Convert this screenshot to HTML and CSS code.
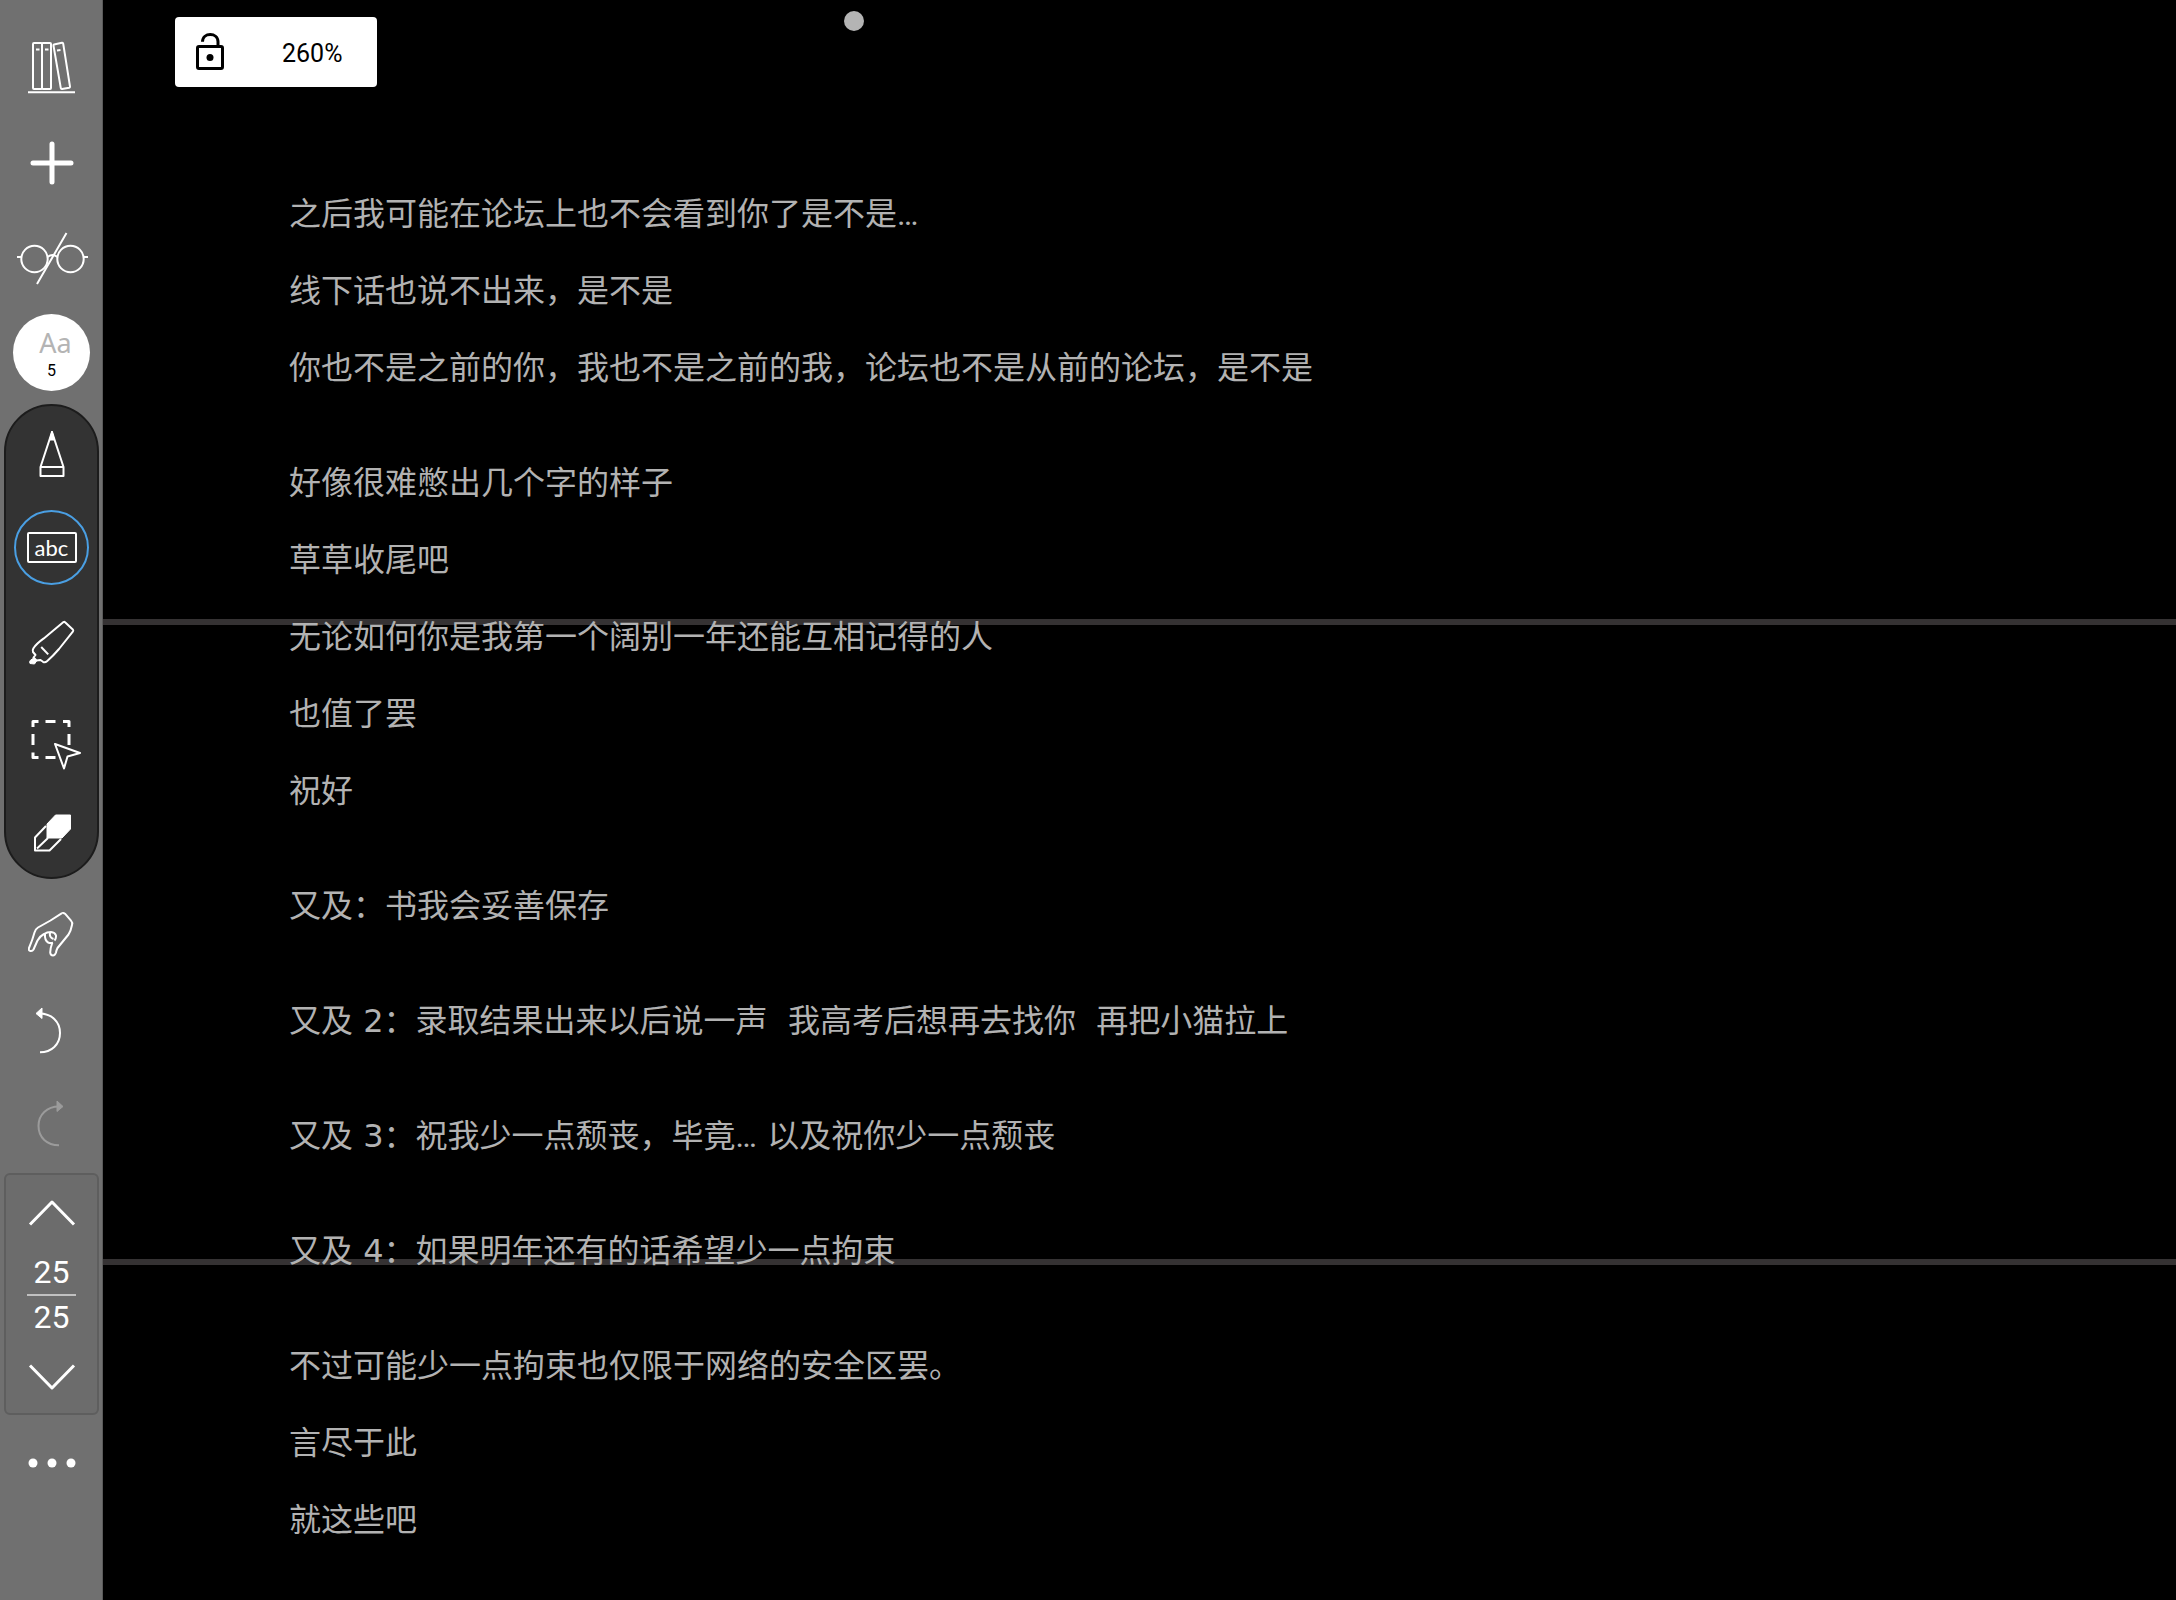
FILE: index.html
```html
<!DOCTYPE html>
<html lang="zh-CN">

<head>
    <meta charset="UTF-8">
    <title>260%</title>
    <link rel="stylesheet" href="styles.css">
</head>

<body>
    <nav id="toolbar">
        <button class="tool library" aria-label="library">
            <svg width="52" height="56" viewBox="0 0 52 56">
                <rect x="7" y="3" width="9" height="46" rx="1"/>
                <rect x="16" y="3" width="9" height="46" rx="1"/>
                <path d="M10 9.500h3.500M19 9.500h3.500M31 10.500l3.500-.5"/>
                <path d="M28 4.500l8-1.700q1-.2 1.200.8l6.800 43q.1 1-.8 1.200l-7.200 1.200q-1 .1-1.200-.9l-7.300-42.500q-.1-.9.500-1.100z"/>
                <path class="thick" d="M2 52.200h47"/>
            </svg>
        </button>
        <button class="tool add" aria-label="add">
            <svg width="44" height="44" viewBox="0 0 44 44">
                <path d="M22 3v38M3 22h38"/>
            </svg>
        </button>
        <button class="tool glasses" aria-label="reading mode">
            <svg width="72" height="54" viewBox="-1 0 72 54">
                <circle cx="17.500" cy="28" r="13.200"/>
                <circle cx="53.500" cy="28" r="13.200"/>
                <path d="M0 26h4.500M66.500 26H71M30.500 26q5-4 10 0M49.500 2L20 53"/>
            </svg>
        </button>
        <button class="style-badge"><span class="sample">Aa</span><span class="size">5</span></button>

        <div id="pens">
            <button class="tool pencil" aria-label="pen">
                <svg width="28" height="48" viewBox="0 0 28 48">
                    <path d="M14 2L2.500 37v9h23v-9zM2.500 37h23"/>
                    <path class="solid" d="M14 1l-2.500 9h5z"/>
                </svg>
            </button>
            <button class="tool text on"><span>abc</span></button>
            <button class="tool marker" aria-label="highlighter">
                <svg width="48" height="48" viewBox="0 0 48 48">
                    <path d="M36.800 3l8 7.500q.8.800.2 1.800L31 30q-6 7-12 12.200-2 1.800-4 .6L12.500 41l-4 .5-3-3 2-2.500-2.500-3q-.8-1.500.3-3.500Q8 25 15.800 19.400 26 11 35.500 3q.8-.5 1.300 0z"/>
                    <path d="M13.200 28l7 7.400"/>
                    <path class="solid" d="M5 39.500l3.500 2.500-2 3-4.500-.5q-.8-1.500.2-3z"/>
                </svg>
            </button>
            <button class="tool select" aria-label="select">
                <svg width="60" height="52" viewBox="-8 0 60 52">
                    <path class="dashes" d="M3 9V3.500h5.500M15.500 3.500h10M33 3.500h6V9M3 16v11M39 16v11M3 34.500v5h5.500M15.500 39.500h10"/>
                    <path class="arrow" d="M25 26l25 9-12.500 3.500L34 50.500z"/>
                </svg>
            </button>
            <button class="tool eraser" aria-label="eraser">
                <svg width="40" height="40" viewBox="0 0 40 40">
                    <path d="M14 13L3 24.500v13H17.500L29 26M5 35.500l11-10.500"/>
                    <path class="solid" d="M23.500 2H38.500v14L30 25H15V11z"/>
                </svg>
            </button>
        </div>

        <button class="tool hand" aria-label="finger mode">
            <svg width="48" height="48" viewBox="0 0 48 48">
                <path d="M34 3.200q1.500-.8 3 .5l6 7q1.800 2 1 4.300-1 5.500-3.500 9.500L29.500 38q-1 2-1.500 4.500-1 3-3 3-2.500 0-2.800-3 .3-5 2-9.500"/>
                <path d="M34 3.200L22.500 10.500 10 17.500q-2.500 1.500-3.500 5Q4.500 30 1 38q-.8 2.800 1.500 3 2 .3 3-1.500l4-9Q12 26 16 24q3-2 7-2 4 .3 5 3.500.3 3-1.500 5"/>
                <path d="M17 24q-.5 6 3 8.500 2.500 1 5 .3M22 22.500q-1 5 3.500 6.500"/>
            </svg>
        </button>
        <button class="tool undo" aria-label="undo">
            <svg width="40" height="48" viewBox="0 0 40 48">
                <path d="M7.500 6.500c12 0 20.500 8 20.500 19.500S19.500 45.300 8 45.300"/>
                <path class="solid" d="M4 6.500L10 1v10.500z"/>
            </svg>
        </button>
        <button class="tool redo" aria-label="redo" disabled>
            <svg width="36" height="48" viewBox="0 0 36 48">
                <path d="M25 6.500C13 6.500 4.500 14.500 4.500 26S13 45.300 25 45.300"/>
                <path class="solid" d="M29 6.500L23 1v10.500z"/>
            </svg>
        </button>

        <div id="pager">
            <button class="tool" aria-label="previous page">
                <svg width="48" height="28" viewBox="0 0 48 28">
                    <path d="M2 25.500L24 3l22 22.500"/>
                </svg>
            </button>
            <div class="pages">
                <span>25</span>
                <span>25</span>
            </div>
            <button class="tool" aria-label="next page">
                <svg width="48" height="28" viewBox="0 0 48 28">
                    <path d="M2 2.500L24 25 46 2.500"/>
                </svg>
            </button>
        </div>

        <button class="tool more" aria-label="more">
            <svg width="48" height="10" viewBox="0 0 48 10">
                <circle cx="5" cy="5" r="4.500"/>
                <circle cx="24" cy="5" r="4.500"/>
                <circle cx="43" cy="5" r="4.500"/>
            </svg>
        </button>
    </nav>

    <main id="page">
        <button id="zoom">
            <svg width="32" height="40" viewBox="0 0 32 40">
                <rect x="3.500" y="14.500" width="25" height="22" rx="1.500"/>
                <path d="M8.500 9.800C8.500 0 24 0 24 9.800V14"/>
                <circle cx="16" cy="25.500" r="3.500"/>
            </svg>
            <span>260%</span>
        </button>
        <span id="handle"></span>
        <hr class="break first">
        <hr class="break second">

        <article id="note">
            <section>
                <p>之后我可能在论坛上也不会看到你了是不是<span class="dots">…</span></p>
                <p>线下话也说不出来，是不是</p>
                <p>你也不是之前的你，我也不是之前的我，论坛也不是从前的论坛，是不是</p>
            </section>
            <section>
                <p>好像很难憋出几个字的样子</p>
                <p>草草收尾吧</p>
                <p>无论如何你是我第一个阔别一年还能互相记得的人</p>
                <p>也值了罢</p>
                <p>祝好</p>
            </section>
            <p>又及：书我会妥善保存</p>
            <p>又及 2：录取结果出来以后说一声  我高考后想再去找你  再把小猫拉上</p>
            <p>又及 3：祝我少一点颓丧，毕竟<span class="dots">…</span> 以及祝你少一点颓丧</p>
            <p>又及 4：如果明年还有的话希望少一点拘束</p>
            <section>
                <p>不过可能少一点拘束也仅限于网络的安全区罢。</p>
                <p>言尽于此</p>
                <p>就这些吧</p>
            </section>
        </article>
    </main>
</body>

</html>
```
FILE: styles.css
```css
* {
    margin: 0;
    padding: 0;
    box-sizing: border-box;
}

body {
    display: flex;
    min-height: 100vh;
    background-color: #000;
    font-family: Roboto, "Noto Sans CJK SC", sans-serif;
}

button {
    border: 0;
    background: none;
    font-family: inherit;
    cursor: pointer;
}

/* 左侧工具栏 */
#toolbar {
    display: flex;
    flex-direction: column;
    align-items: center;
    flex: none;
    width: 103px;
    padding-top: 20px;
    background-color: #707070;
    box-shadow: inset -1px 0 #5a5a5a;
}

.tool {
    display: flex;
    align-items: center;
    justify-content: center;
    flex: none;
    width: 95px;
    height: 95px;
}

#pens .tool {
    width: 91px;
}

.tool svg {
    flex: none;
    fill: none;
    stroke: #fff;
    stroke-width: 2;
    stroke-linejoin: round;
}

.tool .solid {
    fill: #fff;
    stroke-width: 1;
}

.add svg {
    stroke-width: 5;
    stroke-linecap: round;
}

.style-badge {
    display: flex;
    flex-direction: column;
    align-items: center;
    flex: none;
    width: 77px;
    height: 77px;
    margin: 9px 0 13px;
    padding-top: 10px;
    border-radius: 50%;
    background-color: #fff;
}

.style-badge .sample {
    padding-left: 8px;
    font: 27px/37px "Noto Sans", sans-serif;
    color: #b4b4b4;
}

.style-badge .size {
    font-size: 16px;
    line-height: 19px;
    color: #000;
}

#pens {
    display: flex;
    flex-direction: column;
    align-items: center;
    flex: none;
    width: 95px;
    padding-bottom: 9px;
    border: 2px solid #1c1c1c;
    border-radius: 48px;
    background-color: #333;
}

.text span {
    display: flex;
    align-items: center;
    justify-content: center;
    width: 50px;
    height: 31px;
    border: 2px solid #fff;
    border-radius: 2px;
    font: 22px/26px Lato, sans-serif;
    color: #fff;
}

#pens .text {
    width: 75px;
    height: 75px;
    margin: 9px 0 10px;
    border-radius: 50%;
}

#pens .on {
    border: 2px solid #4a9fe3;
}

#pens .select {
    height: 108px;
}

.select svg {
    stroke-width: 3;
}

.select .arrow {
    stroke-width: 2;
}

#pens .eraser {
    height: 70px;
}

.hand {
    margin-top: 7px;
}

.undo {
    height: 100px;
}

.redo {
    height: 86px;
    opacity: 0.3;
}

#pager {
    display: flex;
    flex-direction: column;
    align-items: center;
    justify-content: space-between;
    flex: none;
    width: 95px;
    height: 242px;
    margin-top: 6px;
    border: 2px solid #5e5e5e;
    border-radius: 6px;
    background-color: #6c6c6c;
}

#pager .tool {
    height: 76px;
}

#pager svg {
    stroke-width: 3;
}

.pages span {
    display: block;
    width: 49px;
    font-size: 32px;
    line-height: 43px;
    text-align: center;
    color: #fff;
}

.pages span + span {
    border-top: 2px solid #c0c0c0;
}

.more svg {
    fill: #fff;
    stroke: none;
}

/* 页面 */
#page {
    position: relative;
    flex: 1;
    padding: 176px 0 0 186px;
}

#zoom {
    position: absolute;
    left: 72px;
    top: 17px;
    display: flex;
    align-items: center;
    gap: 56px;
    width: 202px;
    height: 70px;
    padding-left: 19px;
    border-radius: 4px;
    background-color: #fff;
    font-size: 25px;
    color: #000;
}

#zoom span {
    padding-top: 2px;
}

#zoom svg {
    flex: none;
    fill: none;
    stroke: #000;
    stroke-width: 3;
}

#zoom circle {
    fill: #000;
    stroke: none;
}

#handle {
    position: absolute;
    left: 741px;
    top: 11px;
    width: 20px;
    height: 20px;
    border-radius: 50%;
    background-color: #b4b4b4;
}

.break {
    position: absolute;
    left: 0;
    right: 0;
    height: 6px;
    border: 0;
    background-color: #353233;
}

.break.first {
    top: 619px;
}

.break.second {
    top: 1259px;
}

#note {
    position: relative;
    display: flex;
    flex-direction: column;
    gap: 38px;
    font-family: "DejaVu Sans", "Noto Sans CJK SC", sans-serif;
    font-size: 32px;
    line-height: 77px;
    color: #b2b2b2;
    white-space: pre-wrap;
}

#note section {
    white-space: normal;
}

.dots {
    font-family: Roboto, sans-serif;
}
```
